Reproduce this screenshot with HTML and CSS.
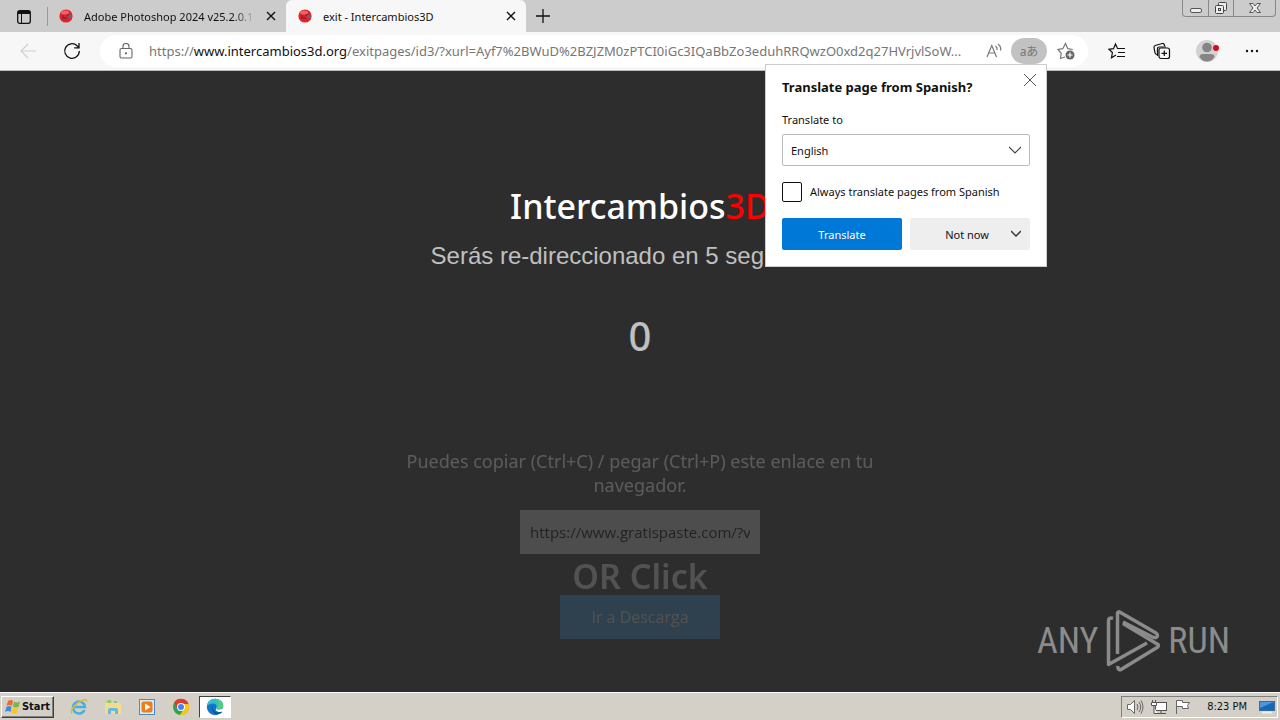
FILE: index.html
```html
<!DOCTYPE html>
<html lang="es">
<head>
    <meta charset="UTF-8">
    <meta name="viewport" content="width=device-width, initial-scale=1.0">
    <title>exit - Intercambios3D</title>
    <link rel="stylesheet" href="styles.css">
</head>
<body>
    <header class="tabs">
        <button class="tab-actions" aria-label="Tab actions">
            <svg width="14" height="14" viewBox="0 0 14 14" fill="none" stroke="#111"><rect x=".7" y=".7" width="12.6" height="12.6" rx="2" stroke-width="1.3"/><path d="M1 2.5h12" stroke-width="3"/><path d="M4.5 3v10"/></svg>
        </button>
        <div class="tab">
            <svg class="favicon" viewBox="0 0 14 14"><circle cx="7" cy="7" r="6.6" fill="#e3202c"/><ellipse cx="6" cy="3.500" rx="4" ry="2" fill="#f06464"/><path d="M4 6v3h4M7.500 6h3" fill="none" stroke="#7d2a34" stroke-width="1.500"/><circle cx="11" cy="7.500" r="2" fill="#667"/></svg>
            <span class="tab-title faded">Adobe Photoshop 2024 v25.2.0.19</span>
            <button class="tab-close" aria-label="Close tab"><svg width="10" height="10" viewBox="0 0 10 10" stroke="#111" stroke-width="1.400"><path d="M1 1l8 8M9 1L1 9"/></svg></button>
        </div>
        <div class="tab active">
            <svg class="favicon" viewBox="0 0 14 14"><circle cx="7" cy="7" r="6.6" fill="#e3202c"/><ellipse cx="6" cy="3.500" rx="4" ry="2" fill="#f06464"/><path d="M4 6v3h4M7.500 6h3" fill="none" stroke="#7d2a34" stroke-width="1.500"/><circle cx="11" cy="7.500" r="2" fill="#667"/></svg>
            <span class="tab-title">exit - Intercambios3D</span>
            <button class="tab-close" aria-label="Close tab"><svg width="10" height="10" viewBox="0 0 10 10" stroke="#111" stroke-width="1.400"><path d="M1 1l8 8M9 1L1 9"/></svg></button>
        </div>
        <button class="new-tab" aria-label="New tab"><svg width="14" height="14" viewBox="0 0 14 14" stroke="#111" stroke-width="1.300"><path d="M7 0v14M0 7h14"/></svg></button>
        <div class="window-controls">
            <button aria-label="Minimize"><svg width="14" height="14" viewBox="0 0 14 14" fill="#eee" stroke="#555"><rect x="1.500" y="7.500" width="11" height="4" rx="1.500"/></svg></button>
            <button aria-label="Restore"><svg width="14" height="14" viewBox="0 0 14 14" fill="#eee" stroke="#444"><rect x="4.500" y="1.500" width="8" height="8" rx="1"/><rect x="1.500" y="4.500" width="8" height="8" rx="1"/><rect x="4.500" y="7.500" width="2" height="2"/></svg></button>
            <button class="wide" aria-label="Close window"><svg width="14" height="14" viewBox="0 0 14 14" fill="#eee" stroke="#555"><path d="M1.500 2.500h3.500l2 2.500 2-2.500h3.500L9 7l3.500 4.500H9L7 9l-2 2.500H1.500L5 7z"/></svg></button>
        </div>
    </header>

    <nav class="toolbar">
        <button class="back" aria-label="Back" disabled><svg width="16" height="16" viewBox="0 0 16 16" fill="none" stroke="#d0d0d0" stroke-width="1.200"><path d="M16 8H1M8 1L1 8l7 7"/></svg></button>
        <button class="reload" aria-label="Refresh"><svg width="18" height="18" viewBox="0 0 18 18" fill="none" stroke="#111" stroke-width="1.300"><path d="M16.300 9a7.300 7.300 0 1 1-2.200-5.200L16 5.500M16 1v4.800h-4.800"/></svg></button>
        <div class="address">
            <svg class="lock" width="14" height="16" viewBox="0 0 14 16" fill="none" stroke="#666" stroke-width="1.100"><rect x="1" y="5.500" width="12" height="9.500" rx="1.500"/><path d="M4 5.500V3.500a3 3 0 0 1 6 0v2"/><circle cx="7" cy="10.300" r=".6" fill="#666"/></svg>
            <a class="url" href="#">https://<b>www.intercambios3d.org</b>/exitpages/id3/?xurl=Ayf7%2BWuD%2BZJZM0zPTCI0iGc3IQaBbZo3eduhRRQwzO0xd2q27HVrjvlSoW...</a>
            <button class="read-aloud" aria-label="Read aloud"><svg width="16" height="16" viewBox="0 0 16 16" fill="none" stroke="#777" stroke-width="1.200"><path d="M1 14L5.800 2.500 10.500 14M2.700 10h6.200M9.500 3q2 1.500 1.500 4M12 1q3.500 2.500 2.500 6.500"/></svg></button>
            <button class="translate-icon" aria-label="Show translate options">aあ</button>
            <button class="add-favorite" aria-label="Add to favorites"><svg width="18" height="18" viewBox="0 0 18 18" fill="none" stroke="#777" stroke-width="1.200"><path d="M8 15l-4.500 1.500.7-5.200L1 7.500l4.800-.8L8.500 1.500l2.300 5.200 5 .8"/><circle cx="13" cy="13" r="4.500" fill="#666" stroke="none"/><path d="M13 10.500v5M10.500 13h5" stroke="#fff"/></svg></button>
        </div>
        <div class="toolbar-actions">
            <button aria-label="Favorites"><svg width="18" height="18" viewBox="0 0 18 18" fill="none" stroke="#111" stroke-width="1.200"><path d="M11 6.500H9.500L7.500 2 5.500 6.700l-4.500.6 3.400 3.200-.9 5.200L8 13M11 6.500h6M10 10.500h7M9 14.500h8"/></svg></button>
            <button aria-label="Collections"><svg width="18" height="18" viewBox="0 0 18 18" fill="none" stroke="#111" stroke-width="1.200"><path d="M4 12.500q-1.500 0-2-1.700L1 5.500Q.8 4 2.300 3.500l7-2q1.500-.3 2 1.200l.4 1.300M4.500 14V7q0-2 2-2H13"/><rect x="6" y="6" width="10.500" height="10.500" rx="2"/><path d="M11.300 8.500v5.500M8.500 11.300h5.500"/></svg></button>
            <button aria-label="Profile"><svg width="24" height="24" viewBox="0 0 24 24"><circle cx="12" cy="12" r="11" fill="#d2d2d2"/><circle cx="12" cy="8.500" r="4.800" fill="#858585"/><path d="M4.500 18q0-3 4-3h7q4 0 4 3-3 4.500-7.500 4.500T4.500 18z" fill="#858585"/><circle cx="21" cy="9" r="3" fill="#d80b1c"/></svg></button>
            <button aria-label="Settings and more"><svg width="14" height="4" viewBox="0 0 14 4" fill="#111"><circle cx="2" cy="2" r="1.200"/><circle cx="7" cy="2" r="1.200"/><circle cx="12" cy="2" r="1.200"/></svg></button>
        </div>
    </nav>

    <main class="page">
        <h1 class="brand">Intercambios<span>3D</span></h1>
        <p class="redirect">Serás re-direccionado en 5 segundos...</p>
        <div class="counter">0</div>
        <form class="link-box">
            <label for="link">Puedes copiar (Ctrl+C) / pegar (Ctrl+P) este enlace en tu navegador.</label>
            <input id="link" type="text" value="https://www.gratispaste.com/?v" readonly>
            <h2>OR Click</h2>
            <button type="button">Ir a Descarga</button>
        </form>
        <div class="watermark">
            <span>ANY</span>
            <svg width="54" height="62" viewBox="0 0 54 62" fill="none" stroke="#8b8b8b" stroke-width="3.500" stroke-linejoin="round"><path d="M7 8.500Q2.500 7 2.500 11V54.500L41 33"/><path d="M11.500 44V3Q12 1 14.500 2.500L50 23q3 2.500 0 4.500h-2.500L17 12"/><path d="M17 13.500L52 34.500q1 1.500-1 3L15 59.500q-3.500 1-3-3.500"/></svg>
            <span>RUN</span>
        </div>
    </main>

    <section class="popup" lang="en">
        <button class="popup-close" aria-label="Close"><svg width="12" height="12" viewBox="0 0 12 12" stroke="#555"><path d="M0 0l12 12M12 0L0 12"/></svg></button>
        <h2>Translate page from Spanish?</h2>
        <label for="language">Translate to</label>
        <div class="select-wrap">
            <select id="language"><option>English</option></select>
            <svg class="chevron" width="12" height="8" viewBox="0 0 12 8" fill="none" stroke="#444" stroke-width="1.200"><path d="M0 1l6 6 6-6"/></svg>
        </div>
        <label class="check"><input type="checkbox">Always translate pages from Spanish</label>
        <div class="popup-buttons">
            <button class="primary">Translate</button>
            <button class="secondary">Not now<svg class="chevron" width="10" height="7" viewBox="0 0 10 7" fill="none" stroke="#333" stroke-width="1.400"><path d="M0 1l5 5 5-5"/></svg></button>
        </div>
    </section>

    <footer class="taskbar">
        <button class="start">
            <svg width="16" height="16" viewBox="0 0 16 16"><path d="M3 2q3-2 5 0L7 7Q4 5 1.500 7z" fill="#ef6a2b"/><path d="M9 2.500q3 2 6 0L13.500 8Q10 9 8 7.500z" fill="#7ab648"/><path d="M1.500 8q3-2 5 0L5.500 13Q3 11 0 13z" fill="#3d8ddd"/><path d="M7.500 8.500q3 2 6 0L12 14q-3 1.500-6-.5z" fill="#f7c62e"/></svg>
            Start
        </button>
        <div class="quick-launch">
            <button aria-label="Internet Explorer"><svg width="18" height="18" viewBox="0 0 18 18" fill="none"><path d="M14.500 12A6 6 0 1 1 15 9H4" stroke="#4aaee2" stroke-width="2.500"/><path d="M2 15.500C-.5 12 6 5 13 2q4-1.500 3.500 2" stroke="#e8b82b" stroke-width="1.500"/></svg></button>
            <button aria-label="File Explorer"><svg width="18" height="18" viewBox="0 0 18 18"><path d="M2 3h5l1 2h8v10H2z" fill="#e5bd51"/><path d="M4 2h3v4H4zM10 3h3v3h-3z" fill="#8fc66e"/><path d="M1 5h16v11H1z" fill="#f3dc8f"/><path d="M4 16v-4q0-2 2-2h6q2 0 2 2v4h-3v-3H7v3z" fill="#69b8e2"/></svg></button>
            <button aria-label="Media Player"><svg width="18" height="18" viewBox="0 0 18 18"><rect x="1.500" y="1.500" width="15" height="15" fill="#d9ebf8" stroke="#4c8cc4"/><rect x="3.500" y="3.500" width="11" height="11" rx="2" fill="#f17c16"/><path d="M7 5.500v7L12.500 9z" fill="#fff"/></svg></button>
            <button aria-label="Chrome"><svg width="18" height="18" viewBox="0 0 18 18"><circle cx="9" cy="9" r="8" fill="#31a350"/><path d="M2 5A8 8 0 0 1 16.500 6H9L5.500 11z" fill="#e33b2e"/><path d="M16.500 6A8 8 0 0 1 8 17l4.500-7L11 6z" fill="#fbc716"/><circle cx="9" cy="9" r="4" fill="#fff"/><circle cx="9" cy="9" r="3" fill="#4285f4"/></svg></button>
            <button class="running" aria-label="Edge"><svg width="18" height="18" viewBox="0 0 18 18"><circle cx="9" cy="9" r="8.200" fill="#1475c4"/><path d="M1 8Q2 1 9 .8q8 .4 8.300 7-.3 3.500-4.300 3.500-3 0-2.500-2Q11 5.500 7 5.500 3 5.500 1 8z" fill="#31bfc9"/><path d="M10 .9q7 .8 7.300 7-.3 3.400-4.300 3.400-3-.3-2.500-2Q15 6 10 .9z" fill="#55cc80"/><path d="M7.500 7q-2.500 6 3 7.500 3 .5 6-1.500l-1 2Q12 17 9 15.500 4 13 7.500 7z" fill="#0c4f99"/><path d="M10.500 9.500q-1 2 2.500 2 3 0 4.500-1.500v3q-3 1.500-5.500.8-3.500-1.300-1.500-4.300z" fill="#fff"/></svg></button>
        </div>
        <div class="tray">
            <svg width="18" height="16" viewBox="0 0 18 16" fill="#fff" stroke="#666"><path d="M1.500 5.500h3l4-4v13l-4-4h-3z"/><path d="M11 5q2 3 0 6M13 3q3.500 5 0 10M15 1.500q4 6.500 0 13" fill="none"/></svg>
            <svg width="18" height="16" viewBox="0 0 18 16" fill="#fff" stroke="#555"><rect x="5.500" y="3.500" width="11" height="8"/><path d="M7 14.500h9M11 12v2"/><path d="M1.500 3.500h5v3h-5zM2.500 1v2M5.500 1v2M4 7v7.500h3"/></svg>
            <svg width="18" height="16" viewBox="0 0 18 16" fill="#fff" stroke="#666"><path d="M2.500 15V1.500h6v2h7l-2 3 1 3h-6v-2h-6"/></svg>
            <time>8:23 PM</time>
            <svg width="16" height="14" viewBox="0 0 16 14"><rect x=".5" y="1.500" width="15" height="9" fill="#1767b8" stroke="#3a6c9c"/><path d="M1 2h14L1 8z" fill="#4a98dc"/><path d="M3 12.500h10" stroke="#eee" stroke-width="2"/></svg>
        </div>
    </footer>
</body>
</html>
```

FILE: styles.css
```css
* {
    box-sizing: border-box;
}
body {
    display: flex;
    flex-direction: column;
    position: relative;
    min-height: 100vh;
    margin: 0;
    font-family: "Noto Sans", "Open Sans", sans-serif;
    font-size: 11px;
    color: #111;
    background: #2d2d2d;
}
button {
    display: flex;
    align-items: center;
    justify-content: center;
    padding: 0;
    border: 0;
    background: none;
    font: inherit;
    color: inherit;
}
svg {
    flex: none;
}

/* tab strip */
.tabs {
    display: flex;
    height: 32px;
    background: #ccc;
}
.tab-actions {
    width: 48px;
    border-right: 1px solid #999;
    margin: 7px 0 6px;
}
.tab {
    display: flex;
    align-items: center;
    gap: 11px;
    width: 238px;
    padding: 0 10px 0 11px;
}
.tab.active {
    width: 240px;
    padding-left: 12px;
    background: #f7f7f7;
    border-radius: 6px 6px 0 0;
}
.favicon {
    width: 14px;
    height: 14px;
}
.tab-title {
    flex: 1;
    min-width: 0;
    white-space: nowrap;
}
.faded {
    mask-image: linear-gradient(to right, #000 88%, transparent);
}
.new-tab {
    width: 34px;
}
.window-controls {
    display: flex;
    height: 17px;
    margin: 0 4px 0 auto;
    border: 1px solid #888;
    border-top: 0;
    border-radius: 0 0 4px 4px;
}
.window-controls button {
    width: 25px;
}
.window-controls button + button {
    border-left: 1px solid #888;
}
.window-controls .wide {
    width: 42px;
}

/* toolbar */
.toolbar {
    display: flex;
    align-items: center;
    height: 39px;
    padding-left: 20px;
    background: #f7f7f7;
    border-bottom: 1px solid #bbb;
}
.back {
    width: 16px;
}
.reload {
    width: 18px;
    margin: 0 27px;
}
.address {
    display: flex;
    flex: 1;
    align-items: center;
    min-width: 0;
    height: 32px;
    margin-left: -8px;
    padding: 0 13px 0 19px;
    border-radius: 16px;
    background: #fff;
}
.url {
    flex: 1;
    min-width: 0;
    margin-left: 16px;
    font-size: 13px;
    white-space: nowrap;
    text-decoration: none;
    color: #767676;
}
.url b {
    font-weight: 400;
    color: #111;
}
.read-aloud {
    width: 34px;
}
.translate-icon {
    width: 36px;
    height: 26px;
    border-radius: 13px;
    background: #c2c2c2;
    font-family: "Noto Sans", "Noto Sans CJK JP", sans-serif;
    font-size: 12px;
    color: #777;
}
.add-favorite {
    width: 18px;
    margin-left: 10px;
}
.toolbar-actions {
    display: flex;
    padding: 0 6px;
}
.toolbar-actions button {
    width: 45px;
}

/* page */
.page {
    display: flex;
    flex: 1;
    flex-direction: column;
    align-items: center;
    position: relative;
    padding-top: 110px;
    color: #c0c0c0;
}
.page h1, .page h2, .page p {
    margin: 0;
}
.brand {
    font-size: 34px;
    line-height: 51px;
    font-weight: 500;
    color: #fff;
}
.brand span {
    color: #f00;
}
.redirect {
    font: 24px/48px "Liberation Sans", Arial, sans-serif;
}
.counter {
    margin-top: 32px;
    font-size: 40px;
    line-height: 48px;
    font-weight: 500;
}
.link-box {
    display: flex;
    flex-direction: column;
    align-items: center;
    width: 480px;
    margin-top: 89px;
    opacity: .25;
}
.link-box label {
    font-size: 18px;
    line-height: 24px;
    text-align: center;
    color: #e5e5e5;
}
.link-box input {
    width: 240px;
    height: 44px;
    margin-top: 13px;
    padding: 0 10px;
    border: 0;
    background: #adadad;
    font: 15px "Open Sans", sans-serif;
    color: #000;
}
.link-box h2 {
    padding-top: 3px;
    font-size: 34px;
    line-height: 38px;
    font-weight: 600;
}
.link-box button {
    width: 160px;
    height: 44px;
    background: #3579af;
    font-family: "Open Sans", sans-serif;
    font-size: 16px;
}
.watermark {
    display: flex;
    align-items: center;
    gap: 8px;
    position: absolute;
    right: 50px;
    bottom: 20px;
    font: 36px "Roboto Condensed", Roboto, sans-serif;
    color: #8b8b8b;
}

/* translate popup */
.popup {
    position: absolute;
    top: 64px;
    right: 233px;
    width: 282px;
    padding: 13px 16px 16px;
    border: 1px solid #ccc;
    background: #fff;
}
.popup h2 {
    margin: 0 0 16px;
    font-size: 13px;
    line-height: 18px;
    font-weight: 700;
}
.popup label {
    display: block;
    line-height: 16px;
}
.popup-close {
    position: absolute;
    top: 9px;
    right: 10px;
}
.select-wrap {
    position: relative;
    margin: 6px 0 16px;
}
.select-wrap select {
    display: block;
    width: 100%;
    height: 32px;
    padding: 0 8px;
    border: 1px solid #bbb;
    border-radius: 2px;
    appearance: none;
    background: #fff;
    font: inherit;
    color: inherit;
}
.chevron {
    position: absolute;
    top: 12px;
    right: 9px;
}
.popup .check {
    display: flex;
    align-items: center;
    gap: 8px;
    white-space: nowrap;
}
.check input {
    width: 20px;
    height: 20px;
    margin: 0;
    border: 1px solid #111;
    border-radius: 2px;
    appearance: none;
}
.popup-buttons {
    display: grid;
    grid-template-columns: 1fr 1fr;
    gap: 8px;
    margin-top: 16px;
}
.popup-buttons button {
    position: relative;
    height: 32px;
    border-radius: 2px;
}
.primary {
    background: #0078d7;
    color: #fff;
}
.popup-buttons .secondary {
    padding-right: 6px;
    background: #eee;
}

/* taskbar */
.taskbar {
    display: flex;
    align-items: center;
    height: 28px;
    padding: 2px 2px 2px 1px;
    border-top: 1px solid #fff;
    background: #d4d0c8;
}
.start {
    gap: 1px;
    width: 53px;
    height: 22px;
    border: 1px solid;
    border-color: #fff #404040 #404040 #fff;
    box-shadow: inset -1px -1px #808080;
    font: bold 11px "DejaVu Sans Condensed", sans-serif;
}
.quick-launch {
    display: flex;
    gap: 2px;
    margin-left: 9px;
}
.quick-launch button {
    width: 32px;
    height: 22px;
}
.quick-launch .running {
    border: 1px solid;
    border-color: #404040 #fff #fff #404040;
    background: #fff;
}
.tray {
    display: flex;
    align-items: center;
    gap: 6px;
    height: 22px;
    margin-left: auto;
    padding: 0 2px 0 4px;
    border: 1px solid;
    border-color: #808080 #fff #fff #808080;
}
.tray time {
    margin: 0 6px 0 9px;
    font: 11px "DejaVu Sans Condensed", sans-serif;
}
```
